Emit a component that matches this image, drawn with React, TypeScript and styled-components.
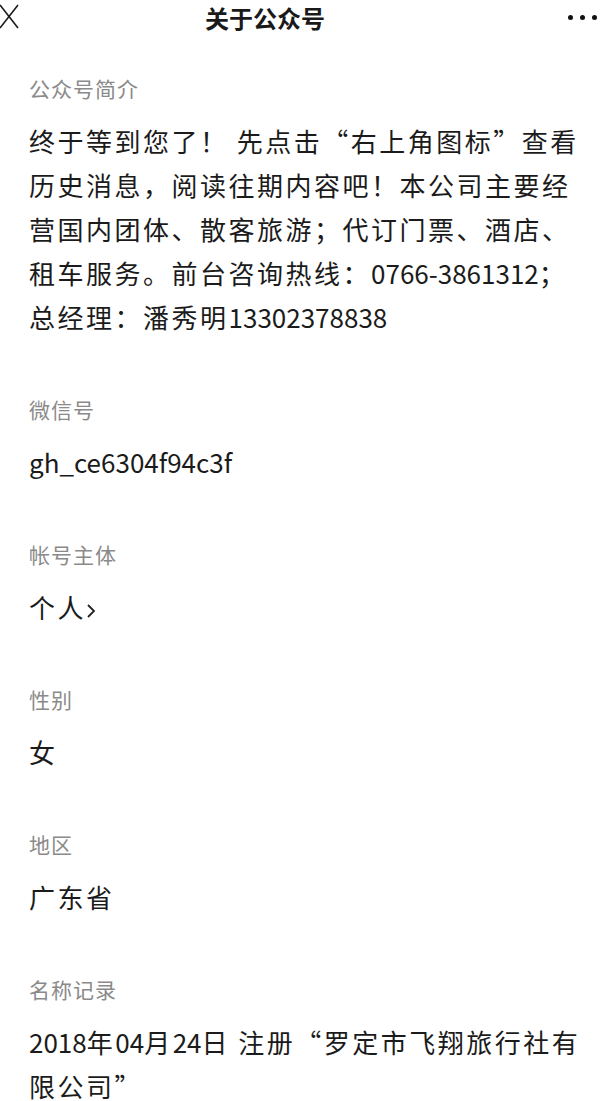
import React from 'react';
import styled, { createGlobalStyle } from 'styled-components';

const GlobalStyle = createGlobalStyle`
  html, body {
    margin: 0;
    padding: 0;
    background: #fff;
  }
  body {
    font-family: "Noto Sans CJK SC", "Noto Sans", sans-serif;
    color: #1b1b1b;
  }
`;

const Page = styled.div`
  width: 600px;
  min-height: 1101px;
  background: #fff;
  overflow: hidden;
`;

const Header = styled.div`
  height: 35px;
  display: flex;
  align-items: center;
  padding-right: 3px;
`;

const Title = styled.div`
  margin-left: 185px;
  font-size: 24px;
  line-height: 1;
  font-weight: 700;
  color: #1a1a1a;
`;

const More = styled.div`
  margin-left: auto;
  display: flex;
  gap: 7px;
  span {
    width: 5px;
    height: 5px;
    border-radius: 50%;
    background: #111;
  }
`;

const Content = styled.div`
  padding: 38px 11px 0 29px;
  display: flex;
  flex-direction: column;
  gap: 55px;
`;

const Section = styled.section`
  display: flex;
  flex-direction: column;
  gap: 16px;
`;

const Label = styled.div`
  font-size: 21px;
  line-height: 30px;
  color: #8a8a8a;
  letter-spacing: 1px;
`;

const Value = styled.div`
  font-size: 26px;
  line-height: 44px;
  color: #1b1b1b;
  letter-spacing: 2.5px;
`;

const Latin = styled.span`
  letter-spacing: 0;
`;

const ChevronMark = styled.svg`
  vertical-align: -1px;
  margin-left: -1px;
`;

const Chevron = () => (
  <ChevronMark width="12" height="16" viewBox="0 0 12 16">
    <path d="M3 2 L9 8 L3 14" fill="none" stroke="#222" strokeWidth="1.8" />
  </ChevronMark>
);

// latin runs keep their natural width, CJK runs get spaced out
const withLatin = (text: string) =>
  text.split(/([A-Za-z0-9_\-]+)/).map((part, i) =>
    /^[A-Za-z0-9_\-]+$/.test(part) ? <Latin key={i}>{part}</Latin> : part
  );

const items: { label: string; value: React.ReactNode }[] = [
  {
    label: '公众号简介',
    value: withLatin(
      '终于等到您了！ 先点击“右上角图标”查看历史消息，阅读往期内容吧！本公司主要经营国内团体、散客旅游；代订门票、酒店、租车服务。前台咨询热线：0766-3861312；总经理：潘秀明13302378838'
    ),
  },
  { label: '微信号', value: withLatin('gh_ce6304f94c3f') },
  {
    label: '帐号主体',
    value: (
      <>
        个人
        <Chevron />
      </>
    ),
  },
  { label: '性别', value: '女' },
  { label: '地区', value: '广东省' },
  { label: '名称记录', value: withLatin('2018年04月24日 注册“罗定市飞翔旅行社有限公司”') },
];

export default function App() {
  return (
    <Page>
      <GlobalStyle />
      <Header>
        <svg width="20" height="30" viewBox="0 0 20 30">
          <path d="M0 2 L18 25 M18 2 L0 25" stroke="#1a1a1a" strokeWidth="1.6" fill="none" />
        </svg>
        <Title>关于公众号</Title>
        <More>
          <span />
          <span />
          <span />
        </More>
      </Header>
      <Content>
        {items.map((it) => (
          <Section key={it.label}>
            <Label>{it.label}</Label>
            <Value>{it.value}</Value>
          </Section>
        ))}
      </Content>
    </Page>
  );
}
